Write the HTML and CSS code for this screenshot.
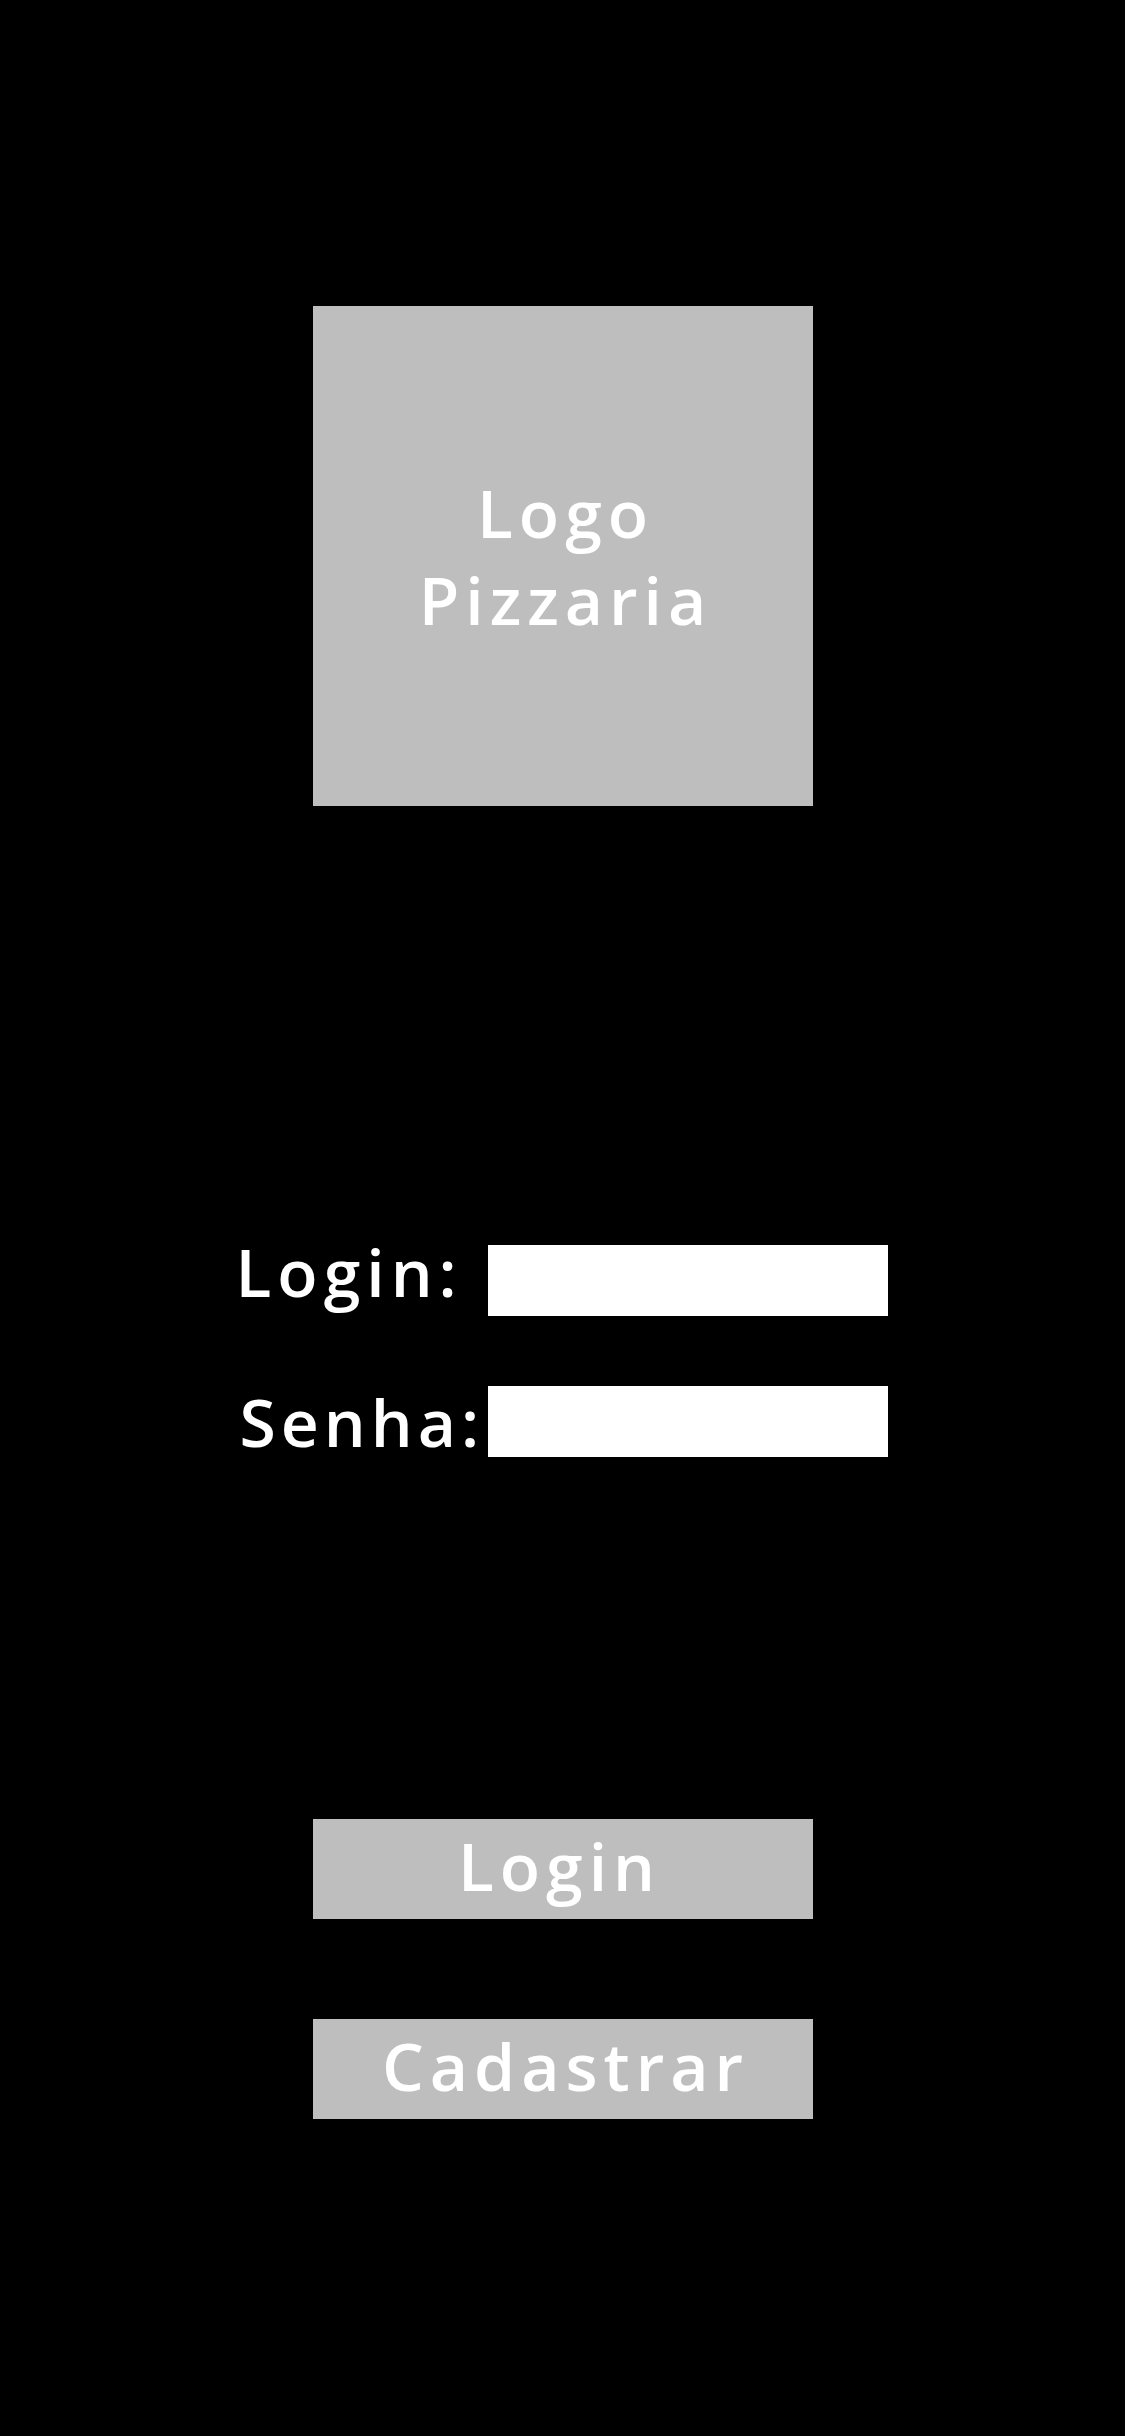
FILE: index.html
```html
<!DOCTYPE html>
<html lang="pt-BR">
<head>
  <meta charset="UTF-8" />
  <meta name="viewport" content="width=device-width, initial-scale=1.0"/>
  <title>Pizzaria - Login</title>
  <link rel="stylesheet" href="styles.css">
</head>
<body>
  <div class="page">
    <div class="logo">Logo<br>Pizzaria</div>

    <form class="login-form">
      <div class="field">
        <label for="login">Login:</label>
        <input type="text" id="login" />
      </div>
      <div class="field field-senha">
        <label for="senha">Senha:</label>
        <input type="password" id="senha" />
      </div>
    </form>

    <div class="actions">
      <button class="btn btn-login">Login</button>
      <button class="btn">Cadastrar</button>
    </div>
  </div>
</body>
</html>
```

FILE: styles.css
```css
body {
  margin: 0;
  background-color: #000;
  color: #fff;
  font-family: 'Open Sans', 'Noto Sans', sans-serif;
  font-weight: 600;
}
.page {
  display: flex;
  flex-direction: column;
  align-items: center;
  padding-top: 306px;
  min-height: 2436px;
  box-sizing: border-box;
}
.logo {
  width: 500px;
  height: 500px;
  background-color: #bebebe;
  display: flex;
  align-items: center;
  justify-content: center;
  text-align: center;
  font-size: 66px;
  line-height: 87px;
  letter-spacing: 6px;
  padding-left: 6px;
  box-sizing: border-box;
}
.login-form {
  margin-top: 439px;
  display: flex;
  flex-direction: column;
  gap: 70px;
  width: 652px;
  margin-left: -2px;
}
.field {
  display: flex;
  align-items: flex-start;
}
.field label {
  width: 252px;
  font-size: 66px;
  line-height: 53px;
  letter-spacing: 6px;
}
.field-senha label {
  margin-top: 9px;
  padding-left: 4px;
  box-sizing: border-box;
  letter-spacing: 5px;
}
.field input {
  width: 400px;
  height: 71px;
  border: none;
  padding: 0;
  margin: 0;
  background-color: #fff;
  outline: none;
}
.actions {
  margin-top: 362px;
  display: flex;
  flex-direction: column;
  gap: 100px;
}
.btn {
  width: 500px;
  height: 100px;
  border: none;
  background-color: #bebebe;
  color: #fff;
  font-family: 'Open Sans', 'Noto Sans', sans-serif;
  font-weight: 600;
  font-size: 66px;
  letter-spacing: 6px;
  padding: 0 0 8px 6px;
  cursor: pointer;
}
.btn-login {
  padding-right: 12px;
}
```
